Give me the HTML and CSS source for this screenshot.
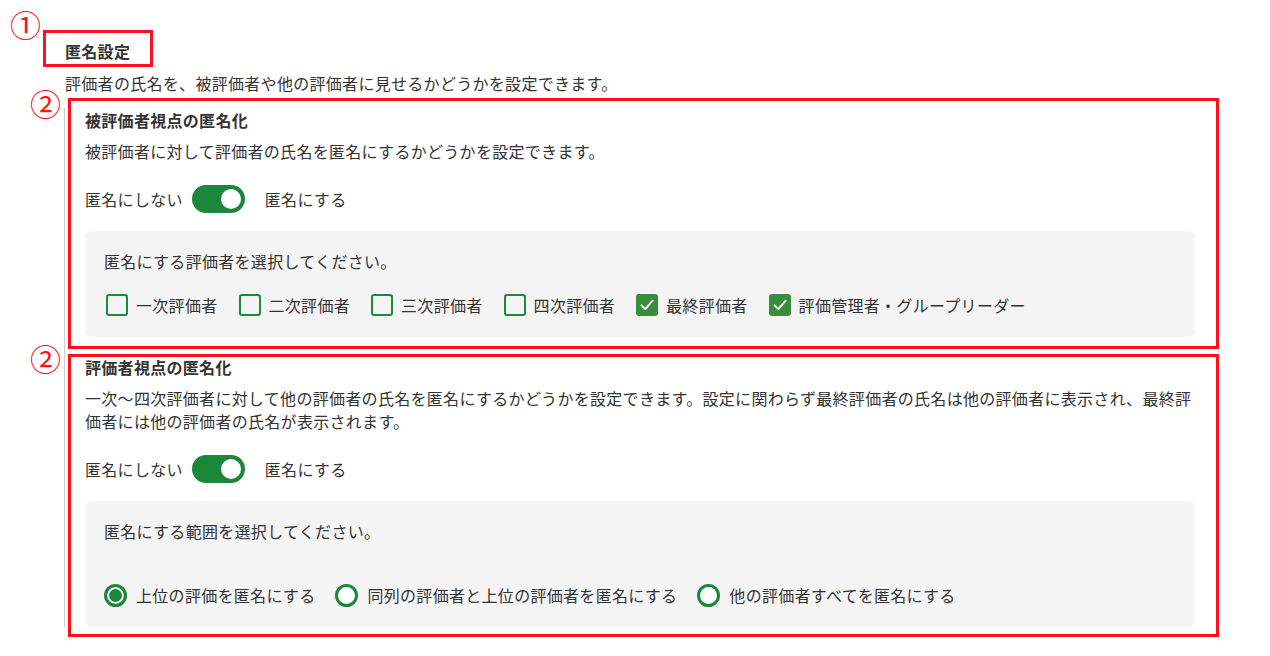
FILE: index.html
```html
<!DOCTYPE html>
<html lang="ja">
<head>
<meta charset="utf-8">
<title>匿名設定</title>
<link rel="stylesheet" href="styles.css">
</head>
<body>
<div class="page">
  <h1 class="heading">匿名設定</h1>
  <p class="lead">評価者の氏名を、被評価者や他の評価者に見せるかどうかを設定できます。</p>

  <div class="settings">
    <section class="setting">
      <h2 class="setting-title">被評価者視点の匿名化</h2>
      <p class="setting-desc">被評価者に対して評価者の氏名を匿名にするかどうかを設定できます。</p>
      <div class="switch-row">
        <span class="switch-label">匿名にしない</span>
        <span class="switch is-on"><span class="knob"></span></span>
        <span class="switch-label">匿名にする</span>
      </div>
      <div class="panel">
        <p class="panel-text">匿名にする評価者を選択してください。</p>
        <div class="options">
          <label class="option"><span class="checkbox"></span>一次評価者</label>
          <label class="option"><span class="checkbox"></span>二次評価者</label>
          <label class="option"><span class="checkbox"></span>三次評価者</label>
          <label class="option"><span class="checkbox"></span>四次評価者</label>
          <label class="option"><span class="checkbox is-checked"><svg viewBox="0 0 22 22" width="22" height="22"><polyline points="5.5,11.3 9.4,15.2 16.6,6.6" fill="none" stroke="#fff" stroke-width="1.8" stroke-linecap="round" stroke-linejoin="round"/></svg></span>最終評価者</label>
          <label class="option"><span class="checkbox is-checked"><svg viewBox="0 0 22 22" width="22" height="22"><polyline points="5.5,11.3 9.4,15.2 16.6,6.6" fill="none" stroke="#fff" stroke-width="1.8" stroke-linecap="round" stroke-linejoin="round"/></svg></span>評価管理者・グループリーダー</label>
        </div>
      </div>
    </section>

    <section class="setting setting-next">
      <h2 class="setting-title">評価者視点の匿名化</h2>
      <p class="setting-desc">一次〜四次評価者に対して他の評価者の氏名を匿名にするかどうかを設定できます。設定に関わらず最終評価者の氏名は他の評価者に表示され、最終評価者には他の評価者の氏名が表示されます。</p>
      <div class="switch-row">
        <span class="switch-label">匿名にしない</span>
        <span class="switch is-on"><span class="knob"></span></span>
        <span class="switch-label">匿名にする</span>
      </div>
      <div class="panel">
        <p class="panel-text">匿名にする範囲を選択してください。</p>
        <div class="options options-radio">
          <label class="option"><span class="radio is-checked"></span>上位の評価を匿名にする</label>
          <label class="option"><span class="radio"></span>同列の評価者と上位の評価者を匿名にする</label>
          <label class="option"><span class="radio"></span>他の評価者すべてを匿名にする</label>
        </div>
      </div>
    </section>
  </div>

  <span class="marker marker-1">①</span>
  <span class="marker marker-2a">②</span>
  <span class="marker marker-2b">②</span>
  <div class="frame frame-title"></div>
  <div class="frame frame-first"></div>
  <div class="frame frame-second"></div>
</div>
</body>
</html>
```

FILE: styles.css
```css
* {
  box-sizing: border-box;
}

html, body {
  margin: 0;
  padding: 0;
  background: #ffffff;
}

body {
  font-family: "Noto Sans CJK JP", "Noto Sans", sans-serif;
  font-size: 16px;
  color: #333333;
  letter-spacing: 0.3px;
}

.page {
  position: relative;
  width: 1270px;
  height: 656px;
  padding-top: 39px;
  overflow: hidden;
}

.heading {
  margin: 0 0 0 65px;
  font-size: 16px;
  font-weight: 700;
  line-height: 24px;
}

.lead {
  margin: 8px 0 0 65px;
  line-height: 24px;
}

.settings {
  margin: 13px 0 0 64px;
  width: 1131px;
  border-left: 1px solid #cfcfcf;
  padding-left: 20px;
}

.setting-next {
  margin-top: 18px;
}

.setting-title {
  margin: 0;
  font-size: 16px;
  font-weight: 700;
  line-height: 24px;
}

.setting-desc {
  margin: 8px 0 0;
  line-height: 23px;
}

.switch-row {
  display: flex;
  align-items: center;
  height: 29px;
  margin-top: 21px;
}

.switch {
  position: relative;
  display: inline-block;
  width: 53px;
  height: 28px;
  margin: 0 20px 0 9px;
  border-radius: 14px;
  background: #1b873b;
}

.knob {
  position: absolute;
  top: 4px;
  right: 4px;
  width: 20px;
  height: 20px;
  border-radius: 50%;
  background: #ffffff;
}

.panel {
  margin-top: 18px;
  padding: 18px 20px 20px 19px;
  background: #f4f4f4;
  border-radius: 6px;
}

.panel-text {
  margin: 0;
  line-height: 24px;
}

.options {
  display: flex;
  align-items: center;
  gap: 19px;
  height: 24px;
  margin-top: 20px;
}

.options-radio {
  gap: 20px;
  margin-top: 40px;
}

.option {
  display: flex;
  align-items: center;
  line-height: 24px;
}

.checkbox {
  display: inline-block;
  width: 22px;
  height: 22px;
  margin: 0 8px 0 2px;
  border: 2px solid #1e8a3e;
  border-radius: 3px;
  background: transparent;
}

.checkbox.is-checked {
  border: none;
  background: #388e3c;
}

.checkbox svg {
  display: block;
}

.radio {
  display: inline-block;
  width: 23px;
  height: 23px;
  margin: 0 9px 0 0;
  border: 3px solid #1b873b;
  border-radius: 50%;
  background: #ffffff;
}

.radio.is-checked {
  background: #1b873b;
  box-shadow: inset 0 0 0 2px #ffffff;
}

/* annotation overlays */
.marker {
  position: absolute;
  font-family: "Noto Sans CJK JP", sans-serif;
  font-size: 31px;
  line-height: 31px;
  color: #ff1020;
  letter-spacing: 0;
}

.marker-1 {
  left: 10px;
  top: 8px;
}

.marker-2a {
  left: 30px;
  top: 87px;
}

.marker-2b {
  left: 30px;
  top: 342px;
}

.frame {
  position: absolute;
  border: 3px solid #ff1020;
}

.frame-title {
  left: 43px;
  top: 30px;
  width: 110px;
  height: 37px;
}

.frame-first {
  left: 68px;
  top: 98px;
  width: 1151px;
  height: 251px;
}

.frame-second {
  left: 68px;
  top: 354px;
  width: 1151px;
  height: 283px;
}
```
